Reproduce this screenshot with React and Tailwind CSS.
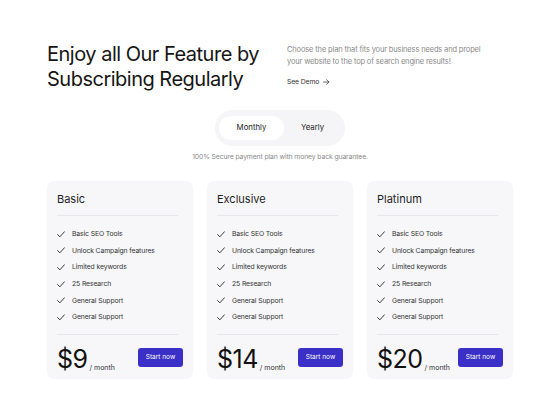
import React from "react";

const features = [
  "Basic SEO Tools",
  "Unlock Campaign features",
  "Limited keywords",
  "25 Research",
  "General Support",
  "General Support",
];

const plans = [
  { name: "Basic", price: "$9" },
  { name: "Exclusive", price: "$14" },
  { name: "Platinum", price: "$20" },
];

function Check() {
  return (
    <svg width="8" height="7" viewBox="0 0 8 7" fill="none" className="shrink-0">
      <path d="M0.6 3.6 L2.9 5.8 L7.4 0.8" stroke="#222" strokeWidth="0.9" strokeLinecap="round" strokeLinejoin="round" />
    </svg>
  );
}

function Card({ name, price }) {
  return (
    <div className="w-[146px] h-[198px] rounded-[8px] bg-[#f7f7f9] pl-[10px] pr-[10px] pt-[10px] flex flex-col">
      <div className="text-[11px] leading-[17px] text-[#1d1d1f]">{name}</div>
      <div className="mt-[7px] mr-[5px] h-px bg-[#e6e6ea]" />
      <div className="mt-[13px] flex flex-col gap-[6.7px]">
        {features.map((f, i) => (
          <div key={i} className="flex items-center gap-[7px] h-[10px]">
            <Check />
            <span className="text-[6.8px] leading-[10px] text-[#333] tracking-[-0.1px]">{f}</span>
          </div>
        ))}
      </div>
      <div className="mt-[12px] mr-[5px] h-px bg-[#e6e6ea]" />
      <div className="mt-[11px] flex items-start justify-between">
        <div className="flex items-end">
          <span className="text-[25px] leading-[26px] text-[#111] tracking-[-0.5px]">{price}</span>
          <span className="text-[7px] leading-[8px] text-[#333] ml-[2px]">/ month</span>
        </div>
        <button className="mt-[2px] w-[45px] h-[19px] rounded-[3px] bg-[#3a2fc6] text-white text-[6.5px] leading-[19px]">
          Start now
        </button>
      </div>
    </div>
  );
}

export default function App() {
  return (
    <div className="w-[560px] h-[400px] bg-white" style={{ fontFamily: "Inter, 'Noto Sans', sans-serif" }}>
      <div className="pl-[47px] pt-[42px] flex">
        <h1 className="w-[240px] text-[20px] leading-[25px] text-[#151515] tracking-[-0.5px] font-normal">
          Enjoy all Our Feature by Subscribing Regularly
        </h1>
        <div className="pt-[2px]">
          <p className="w-[203px] text-[7.5px] leading-[12px] text-[#8a8a8a] tracking-[-0.15px]">
            Choose the plan that fits your business needs and propel your website to the top of search engine results!
          </p>
          <div className="mt-[9px] flex items-center gap-[4px] text-[6.8px] leading-[10px] text-[#333] tracking-[-0.1px]">
            <span>See Demo</span>
            <svg width="7" height="6" viewBox="0 0 7 6" fill="none">
              <path d="M0.5 3 H6 M3.6 0.7 L6 3 L3.6 5.3" stroke="#444" strokeWidth="0.8" strokeLinecap="round" strokeLinejoin="round" />
            </svg>
          </div>
        </div>
      </div>
      <div className="mt-[18px] flex justify-center">
        <div className="w-[130px] h-[36px] rounded-full bg-[#f5f5f7] flex items-center pl-[4px] pr-[4px]">
          <div className="w-[65px] h-[24px] rounded-full bg-white flex items-center justify-center text-[7.8px] text-[#222]">
            Monthly
          </div>
          <div className="flex-1 flex items-center justify-center text-[7.8px] text-[#222]">Yearly</div>
        </div>
      </div>
      <div className="mt-[6px] text-center text-[6.8px] leading-[10px] text-[#8a8a8a] tracking-[-0.1px]">
        100% Secure payment plan with money back guarantee.
      </div>
      <div className="mt-[19px] flex justify-center gap-[14px]">
        {plans.map((p) => (
          <Card key={p.name} {...p} />
        ))}
      </div>
    </div>
  );
}
